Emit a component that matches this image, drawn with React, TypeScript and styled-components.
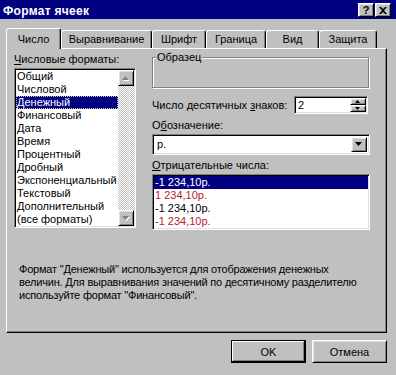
import React from "react";
import styled, { createGlobalStyle, css } from "styled-components";

const GlobalStyle = createGlobalStyle`
  html, body {
    margin: 0;
    padding: 0;
    background: #c0c0c0;
    overflow: hidden;
  }
  body {
    font-family: "Liberation Sans", Arial, sans-serif;
    font-size: 11px;
    color: #000;
  }
`;

const raised = css`
  border: 1px solid;
  border-color: #fff #000 #000 #fff;
  box-shadow: inset 1px 1px #dfdfdf, inset -1px -1px #808080;
  background: #c0c0c0;
  box-sizing: border-box;
`;

const sunken = css`
  border: 1px solid;
  border-color: #808080 #fff #fff #808080;
  box-shadow: inset 1px 1px #000, inset -1px -1px #dfdfdf;
  background: #fff;
  box-sizing: border-box;
  padding: 1px;
`;

const leftItems = [
  "Общий",
  "Числовой",
  "Денежный",
  "Финансовый",
  "Дата",
  "Время",
  "Процентный",
  "Дробный",
  "Экспоненциальный",
  "Текстовый",
  "Дополнительный",
  "(все форматы)",
];

const negItems = [
  { text: "-1 234,10р.", red: false },
  { text: "1 234,10р.", red: true },
  { text: "-1 234,10р.", red: false },
  { text: "-1 234,10р.", red: true },
];

const tabs = [
  { label: "Число", width: 55 },
  { label: "Выравнивание", width: 91 },
  { label: "Шрифт", width: 54 },
  { label: "Граница", width: 60 },
  { label: "Вид", width: 53 },
  { label: "Защита", width: 58 },
];

const Arrow = ({ dir, disabled, w = 7 }: { dir: "up" | "down"; disabled?: boolean; w?: number }) => {
  const h = Math.ceil(w / 2);
  const pts = dir === "up" ? `0,${h} ${w},${h} ${w / 2},0` : `0,0 ${w},0 ${w / 2},${h}`;
  return (
    <svg width={w + 1} height={h + 1} viewBox={`0 0 ${w + 1} ${h + 1}`}>
      {disabled && <polygon points={pts} fill="#fff" transform="translate(1,1)" />}
      <polygon points={pts} fill={disabled ? "#808080" : "#000"} />
    </svg>
  );
};

export default function App() {
  return (
    <>
      <GlobalStyle />
      <Dialog>
        <TitleBar>
          <Title>Формат ячеек</Title>
          <TitleButtons>
            <CaptionButton>?</CaptionButton>
            <CaptionButton>
              <svg width="8" height="7" viewBox="0 0 8 7">
                <path d="M0 0h2l2 2 2-2h2L5 3.5 8 7H6L4 5 2 7H0l3-3.5z" fill="#000" />
              </svg>
            </CaptionButton>
          </TitleButtons>
        </TitleBar>

        <Body>
          <TabStrip>
            {tabs.map((t, i) => (
              <Tab key={t.label} $active={i === 0} $width={t.width}>
                {t.label}
              </Tab>
            ))}
          </TabStrip>

          <Panel>
            <Columns>
              <LeftCol>
                <Label>
                  <u>Ч</u>исловые форматы:
                </Label>
                <ListBox $height={160}>
                  <Rows>
                    {leftItems.map((item, i) => (
                      <Row key={item} $selected={i === 2} $focus={i === 2}>
                        {item}
                      </Row>
                    ))}
                  </Rows>
                  <ScrollBar>
                    <ScrollButton>
                      <Arrow dir="up" disabled />
                    </ScrollButton>
                    <ScrollButton>
                      <Arrow dir="down" disabled />
                    </ScrollButton>
                  </ScrollBar>
                </ListBox>
              </LeftCol>

              <RightCol>
                <GroupBox>
                  <Legend>Образец</Legend>
                </GroupBox>

                <SpinRow>
                  <span>
                    Число десятичных <u>з</u>наков:
                  </span>
                  <SpinField>
                    <FieldText>2</FieldText>
                    <SpinButtons>
                      <SpinButton>
                        <Arrow dir="up" w={5} />
                      </SpinButton>
                      <SpinButton>
                        <Arrow dir="down" w={5} />
                      </SpinButton>
                    </SpinButtons>
                  </SpinField>
                </SpinRow>

                <Label $top={5}>
                  О<u>б</u>означение:
                </Label>
                <Combo>
                  <FieldText>р.</FieldText>
                  <DropButton>
                    <Arrow dir="down" />
                  </DropButton>
                </Combo>

                <Label $top={4}>
                  <u>О</u>трицательные числа:
                </Label>
                <ListBox $height={56}>
                  <Rows>
                    {negItems.map((n, i) => (
                      <Row key={i} $selected={i === 0} $red={n.red}>
                        {n.text}
                      </Row>
                    ))}
                  </Rows>
                </ListBox>
              </RightCol>
            </Columns>

            <Description>
              Формат "Денежный" используется для отображения денежных
              <br />
              величин. Для выравнивания значений по десятичному разделителю
              <br />
              используйте формат "Финансовый".
            </Description>
          </Panel>

          <ButtonRow>
            <PushButton $default>OK</PushButton>
            <PushButton>Отмена</PushButton>
          </ButtonRow>
        </Body>
      </Dialog>
    </>
  );
}

const Dialog = styled.div`
  width: 396px;
  height: 375px;
  background: #c0c0c0;
  display: flex;
  flex-direction: column;
`;

const TitleBar = styled.div`
  height: 19px;
  background: #000080;
  display: flex;
  align-items: center;
  justify-content: space-between;
  padding: 0 5px 0 3px;
`;

const Title = styled.span`
  color: #fff;
  font-weight: bold;
  font-size: 12px;
  letter-spacing: 0.3px;
  padding-top: 2px;
`;

const TitleButtons = styled.div`
  display: flex;
  gap: 1px;
  padding-top: 1px;
`;

const CaptionButton = styled.div`
  ${raised};
  width: 16px;
  height: 14px;
  display: flex;
  align-items: center;
  justify-content: center;
  font-weight: bold;
  font-size: 11px;
  line-height: 1;
`;

const Body = styled.div`
  display: flex;
  flex-direction: column;
  padding: 9px 9px 0 6px;
`;

const TabStrip = styled.div`
  display: flex;
  align-items: flex-end;
  height: 20px;
`;

const Tab = styled.div<{ $active?: boolean; $width: number }>`
  box-sizing: border-box;
  width: ${(p) => p.$width}px;
  height: ${(p) => (p.$active ? 21 : 18)}px;
  margin-bottom: ${(p) => (p.$active ? -1 : 0)}px;
  padding-top: ${(p) => (p.$active ? 4 : 2)}px;
  border-top: 1px solid #fff;
  border-left: 1px solid #fff;
  border-right: 1px solid #000;
  border-radius: 3px 3px 0 0;
  box-shadow: inset -1px 0 #808080;
  background: #c0c0c0;
  text-align: center;
  line-height: 13px;
  position: ${(p) => (p.$active ? "relative" : "static")};
  z-index: ${(p) => (p.$active ? 1 : 0)};
`;

const Panel = styled.div`
  box-sizing: border-box;
  width: 381px;
  height: 285px;
  border: 1px solid;
  border-color: #fff #000 #000 #fff;
  box-shadow: inset -1px -1px #808080;
  padding: 4px 0 0 7px;
  display: flex;
  flex-direction: column;
`;

const Columns = styled.div`
  display: flex;
  gap: 16px;
`;

const LeftCol = styled.div`
  width: 122px;
  display: flex;
  flex-direction: column;
`;

const RightCol = styled.div`
  width: 218px;
  display: flex;
  flex-direction: column;
`;

const Label = styled.div<{ $top?: number }>`
  line-height: 13px;
  height: 13px;
  margin-top: ${(p) => p.$top ?? 0}px;
  margin-bottom: 2px;
  white-space: nowrap;
`;

const ListBox = styled.div<{ $height: number }>`
  ${sunken};
  height: ${(p) => p.$height}px;
  display: flex;
`;

const Rows = styled.div`
  flex: 1;
  display: flex;
  flex-direction: column;
  overflow: hidden;
`;

const Row = styled.div<{ $selected?: boolean; $focus?: boolean; $red?: boolean }>`
  height: 13px;
  line-height: 13px;
  padding-left: 1px;
  white-space: nowrap;
  color: ${(p) => (p.$selected ? "#fff" : p.$red ? "#b81a30" : "#000")};
  background: ${(p) => (p.$selected ? "#000080" : "transparent")};
  outline: ${(p) => (p.$focus ? "1px dotted #c8c8a0" : "none")};
  outline-offset: -1px;
`;

const ScrollBar = styled.div`
  width: 16px;
  display: flex;
  flex-direction: column;
  justify-content: space-between;
  background-color: #fff;
  background-image: repeating-conic-gradient(#c0c0c0 0 25%, #fff 0 50%);
  background-size: 2px 2px;
`;

const ScrollButton = styled.div`
  ${raised};
  width: 16px;
  height: 16px;
  display: flex;
  align-items: center;
  justify-content: center;
`;

const GroupBox = styled.div`
  position: relative;
  box-sizing: border-box;
  width: 217px;
  height: 31px;
  margin-top: 4px;
  border: 1px solid #808080;
  box-shadow: inset 1px 1px #fff, 1px 1px #fff;
`;

const Legend = styled.span`
  position: absolute;
  top: -7px;
  left: 3px;
  padding: 0 1px;
  line-height: 13px;
  background: #c0c0c0;
`;

const SpinRow = styled.div`
  display: flex;
  align-items: center;
  justify-content: space-between;
  margin-top: 8px;
  padding-right: 2px;
`;

const SpinField = styled.div`
  ${sunken};
  width: 74px;
  height: 18px;
  display: flex;
  align-items: stretch;
`;

const FieldText = styled.div`
  flex: 1;
  padding-left: 2px;
  line-height: 14px;
`;

const SpinButtons = styled.div`
  display: flex;
  flex-direction: column;
`;

const SpinButton = styled.div`
  ${raised};
  width: 16px;
  height: 7px;
  flex: 1;
  display: flex;
  align-items: center;
  justify-content: center;
`;

const Combo = styled.div`
  ${sunken};
  width: 218px;
  height: 21px;
  display: flex;
  align-items: stretch;
  padding: 2px;
`;

const DropButton = styled.div`
  ${raised};
  width: 16px;
  display: flex;
  align-items: center;
  justify-content: center;
`;

const Description = styled.div`
  margin-top: 33px;
  padding-left: 5px;
  line-height: 13px;
  letter-spacing: -0.2px;
  white-space: nowrap;
`;

const ButtonRow = styled.div`
  display: flex;
  justify-content: flex-end;
  gap: 6px;
  margin-top: 7px;
`;

const PushButton = styled.div<{ $default?: boolean }>`
  box-sizing: border-box;
  width: 75px;
  height: 23px;
  display: flex;
  align-items: center;
  justify-content: center;
  background: #c0c0c0;
  ${(p) =>
    p.$default
      ? css`
          border: 1px solid #000;
          box-shadow: inset -1px -1px #000, inset 1px 1px #fff, inset -2px -2px #808080;
        `
      : css`
          border: 1px solid;
          border-color: #fff #000 #000 #fff;
          box-shadow: inset 1px 1px #dfdfdf, inset -1px -1px #808080;
        `}
`;
